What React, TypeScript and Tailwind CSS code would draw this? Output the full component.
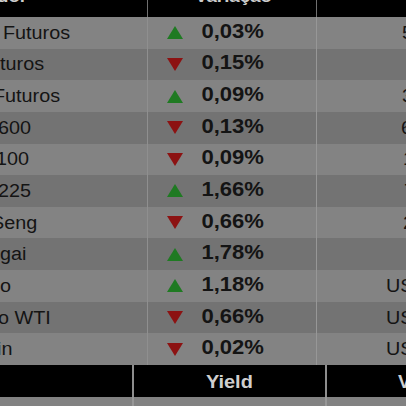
import React from "react";

type Row = {
  label: string;
  lml: string;
  up: boolean;
  pct: string;
  val: string;
  vpl: string;
};

const rows: Row[] = [
  { label: "Futuros", lml: "ml-[3px]", up: true, pct: "0,03%", val: "5.283,75", vpl: "pl-[85px]" },
  { label: "Futuros", lml: "-ml-[23px]", up: false, pct: "0,15%", val: "16.120", vpl: "pl-[96px]" },
  { label: "Futuros", lml: "-ml-[7px]", up: true, pct: "0,09%", val: "3.468,20", vpl: "pl-[85px]" },
  { label: "600", lml: "-ml-[2px]", up: false, pct: "0,13%", val: "6.012,40", vpl: "pl-[84px]" },
  { label: "100", lml: "-ml-[4px]", up: false, pct: "0,09%", val: "1.250,30", vpl: "pl-[86px]" },
  { label: "225", lml: "-ml-[2px]", up: true, pct: "1,66%", val: "7.450,10", vpl: "pl-[87px]" },
  { label: "Seng", lml: "-ml-[9px]", up: false, pct: "0,66%", val: "2.018,50", vpl: "pl-[86px]" },
  { label: "gai", lml: "ml-[0px]", up: true, pct: "1,78%", val: "3.250", vpl: "pl-[96px]" },
  { label: "o", lml: "ml-[0px]", up: true, pct: "1,18%", val: "US$ 85,23", vpl: "pl-[69px]" },
  { label: "o WTI", lml: "-ml-[2px]", up: false, pct: "0,66%", val: "US$ 79,41", vpl: "pl-[69px]" },
  { label: "in", lml: "-ml-[3px]", up: false, pct: "0,02%", val: "US$ 27.312", vpl: "pl-[69px]" },
];

function Tri({ up }: { up: boolean }) {
  return (
    <svg width="16" height="13" viewBox="0 0 16 13" className="shrink-0">
      {up ? (
        <polygon points="8,0 16,13 0,13" fill="#1f7a22" />
      ) : (
        <polygon points="0,0 16,0 8,13" fill="#8c1212" />
      )}
    </svg>
  );
}

export default function App() {
  return (
    <div className="w-[406px] h-[406px] overflow-hidden bg-[#7c7c7c] font-['Liberation_Sans',Arial,sans-serif] text-[#141414]">
      {/* top header */}
      <div className="h-[17px] bg-black grid grid-cols-[147px_169px_1fr] overflow-hidden text-[#cdcdcd] font-bold text-[17px] leading-[20px]">
        <div className="overflow-hidden">
          <div className="-mt-[13px] -ml-[3px] origin-left scale-x-[1.1] whitespace-nowrap">dor</div>
        </div>
        <div className="border-l border-[#6f6f6f] overflow-hidden">
          <div className="-mt-[13px] ml-[3px] text-center scale-x-[1.1] whitespace-nowrap">Variação</div>
        </div>
        <div className="border-l border-[#6f6f6f]" />
      </div>

      {/* body rows */}
      <div className="h-[348px] grid grid-rows-[repeat(11,1fr)]">
        {rows.map((r, i) => (
          <div
            key={i}
            className={`grid grid-cols-[147px_169px_1fr] ${i % 2 === 0 ? "bg-[#838383]" : "bg-[#737373]"}`}
          >
            <div className="flex items-center overflow-hidden">
              <span className={`inline-block ${r.lml} origin-left scale-x-[1.1] text-[18px] leading-none whitespace-nowrap`}>
                {r.label}
              </span>
            </div>
            <div className="flex items-center border-l border-[#8f8f8f] pl-[19px] pr-[33px]">
              <Tri up={r.up} />
              <div className="flex-1 text-center">
                <span className="inline-block scale-x-[1.13] text-[19.5px] font-bold leading-none whitespace-nowrap">
                  {r.pct}
                </span>
              </div>
            </div>
            <div className={`flex items-center border-l border-[#979797] overflow-hidden ${r.vpl}`}>
              <span className="inline-block origin-left scale-x-[1.1] text-[18px] leading-none whitespace-nowrap">
                {r.val}
              </span>
            </div>
          </div>
        ))}
      </div>

      {/* bottom header */}
      <div className="h-[32px] bg-black grid grid-cols-[134px_193px_1fr] text-[#cfcfcf] font-bold text-[19px]">
        <div className="border-r-2 border-[#8d8d8d]" />
        <div className="flex items-center justify-center border-r-2 border-[#8d8d8d]">
          <span className="inline-block scale-x-[1.05] leading-none">Yield</span>
        </div>
        <div className="flex items-center pl-[71px] overflow-hidden">
          <span className="inline-block leading-none whitespace-nowrap">Variação</span>
        </div>
      </div>
      <div className="h-[9px] bg-[#828282] grid grid-cols-[134px_193px_1fr]">
        <div className="border-r-2 border-[#979797]" />
        <div className="border-r-2 border-[#979797]" />
        <div />
      </div>
    </div>
  );
}
